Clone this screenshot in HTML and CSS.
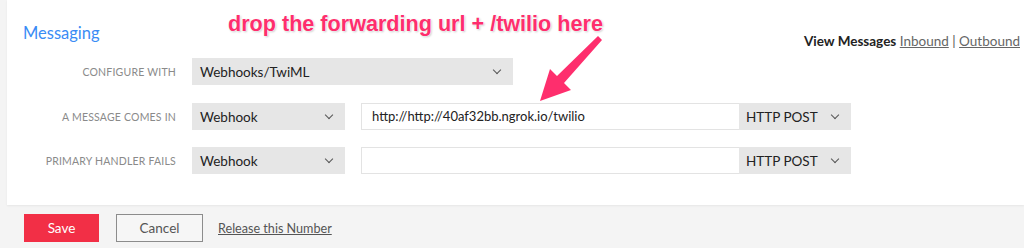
FILE: index.html
```html
<!DOCTYPE html>
<html lang="en">
<head>
    <meta charset="UTF-8">
    <title>Messaging configuration</title>
    <link rel="stylesheet" href="styles.css">
</head>
<body>
    <div class="page">
        <!-- Main white panel -->
        <div class="panel">
            <div class="panel-head">
                <h2 class="panel-title">Messaging</h2>
                <div class="view-links">
                    <b>View Messages</b> <a href="#">Inbound</a> | <a href="#">Outbound</a>
                </div>
            </div>

            <div class="form-row first">
                <label class="row-label">Configure with</label>
                <div class="select wide">Webhooks/TwiML<span class="chev"></span></div>
            </div>

            <div class="form-row">
                <label class="row-label">A message comes in</label>
                <div class="select">Webhook<span class="chev"></span></div>
                <div class="url-group">
                    <div class="url-input">http://http://40af32bb.ngrok.io/twilio</div>
                    <div class="select method">HTTP POST<span class="chev"></span></div>
                </div>
            </div>

            <div class="form-row">
                <label class="row-label">Primary handler fails</label>
                <div class="select">Webhook<span class="chev"></span></div>
                <div class="url-group">
                    <div class="url-input"></div>
                    <div class="select method">HTTP POST<span class="chev"></span></div>
                </div>
            </div>
        </div>

        <!-- Footer buttons -->
        <div class="actions">
            <button class="btn btn-save">Save</button>
            <button class="btn btn-cancel">Cancel</button>
            <a href="#" class="release-link">Release this Number</a>
        </div>

        <!-- Screenshot annotation on top -->
        <div class="note">drop the forwarding url + /twilio here</div>
        <svg class="note-arrow" width="1024" height="248" viewBox="0 0 1024 248">
            <polygon points="540,101 550,69 557,76 598,36 602,40 564,83 571,90" fill="#fff" stroke="#fff" stroke-width="3" stroke-linejoin="round"/>
            <polygon points="540,101 550,69 557,76 598,36 602,40 564,83 571,90" fill="#fe2e6d"/>
        </svg>
    </div>
</body>
</html>
```

FILE: styles.css
```css
body {
    margin: 0;
    background-color: #f4f4f4;
    font-family: Lato, "Open Sans", Arial, sans-serif;
    color: #222;
}

.page {
    position: relative;
    width: 1024px;
    height: 248px;
    overflow: hidden;
}

.panel {
    margin-left: 7px;
    height: 205px;
    box-sizing: border-box;
    background-color: #ffffff;
    padding: 0 4px 0 16px;
    box-shadow: 0 1px 2px rgba(0, 0, 0, 0.06);
}

.panel-head {
    display: flex;
    justify-content: space-between;
    align-items: flex-start;
    padding-top: 22px;
    height: 36px;
}

.panel-title {
    margin: 0;
    font-size: 16.5px;
    font-weight: normal;
    color: #3a8cf5;
    line-height: 22px;
}

.view-links {
    margin-top: 10px;
    font-size: 13.5px;
    line-height: 18px;
    color: #555;
}

.view-links b {
    color: #222;
}

.view-links a {
    color: #666;
    text-decoration: underline;
}

.form-row {
    display: flex;
    align-items: center;
    gap: 16px;
    height: 27px;
    margin-bottom: 17px;
}

.form-row.first {
    margin-bottom: 18px;
}

.row-label {
    width: 153px;
    text-align: right;
    font-size: 10.5px;
    letter-spacing: 0.2px;
    text-transform: uppercase;
    color: #8a8a8a;
}

.select {
    display: flex;
    align-items: center;
    justify-content: space-between;
    box-sizing: border-box;
    width: 153px;
    height: 27px;
    padding: 0 13px 0 8px;
    background-color: #e6e6e6;
    font-size: 13.5px;
    color: #222;
}

.select.wide {
    width: 321px;
}

.chev {
    width: 5px;
    height: 5px;
    border-right: 1.5px solid #555;
    border-bottom: 1.5px solid #555;
    transform: rotate(45deg);
    margin-top: -4px;
}

.url-group {
    display: flex;
}

.url-input {
    box-sizing: border-box;
    width: 378px;
    height: 27px;
    line-height: 25px;
    padding: 0 10px;
    border: 1px solid #e3e3e3;
    border-right: none;
    font-size: 13px;
    color: #222;
}

.select.method {
    width: 112px;
    padding-left: 7px;
}

.actions {
    display: flex;
    align-items: center;
    padding: 9px 0 0 24px;
}

.btn {
    height: 28px;
    font-family: Lato, "Open Sans", Arial, sans-serif;
    font-size: 13.5px;
    cursor: pointer;
}

.btn-save {
    width: 75px;
    border: none;
    background-color: #f22f46;
    color: #ffffff;
    margin-right: 17px;
}

.btn-cancel {
    width: 87px;
    border: 1.5px solid #8c8c8c;
    background-color: #f6f6f6;
    color: #555;
    margin-right: 15px;
}

.release-link {
    font-size: 12.6px;
    color: #555;
    text-decoration: underline;
}

/* annotation overlay */
.note {
    position: absolute;
    top: 11px;
    left: 228px;
    font-family: "Liberation Sans", Arial, sans-serif;
    font-weight: bold;
    font-size: 21.6px;
    color: #fe2e6d;
    text-shadow: 0 0 2px #fff, 0 0 2px #fff, 1px 1px 2px rgba(0, 0, 0, 0.25);
}

.note-arrow {
    position: absolute;
    top: 0;
    left: 0;
}
```
